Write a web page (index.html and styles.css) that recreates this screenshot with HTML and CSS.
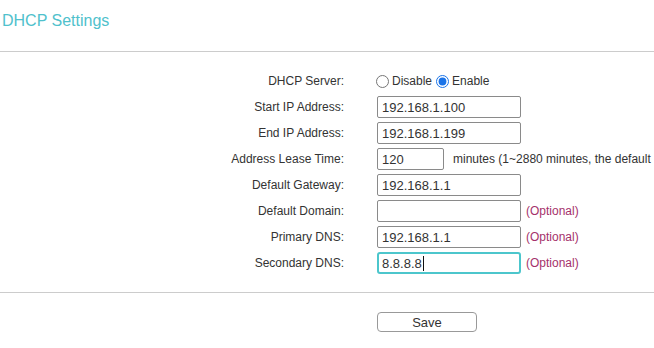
FILE: index.html
```html
<!DOCTYPE html>
<html lang="en">
<head>
    <meta charset="UTF-8">
    <meta name="viewport" content="width=device-width, initial-scale=1.0">
    <title>DHCP Settings</title>
    <link rel="stylesheet" href="styles.css">
</head>
<body>
    <div class="panel">
        <div class="panel-header">
            <h2>DHCP Settings</h2>
        </div>

        <div class="form">
            <label class="form-label">DHCP Server:</label>
            <div class="form-field radio-group">
                <label class="radio"><input type="radio" name="dhcp"> Disable</label>
                <label class="radio"><input type="radio" name="dhcp" checked> Enable</label>
            </div>

            <label class="form-label">Start IP Address:</label>
            <div class="form-field"><input type="text" class="text-input" value="192.168.1.100"></div>

            <label class="form-label">End IP Address:</label>
            <div class="form-field"><input type="text" class="text-input" value="192.168.1.199"></div>

            <label class="form-label">Address Lease Time:</label>
            <div class="form-field">
                <input type="text" class="text-input short" value="120">
                <span class="hint">minutes (1~2880 minutes, the default</span>
            </div>

            <label class="form-label">Default Gateway:</label>
            <div class="form-field"><input type="text" class="text-input" value="192.168.1.1"></div>

            <label class="form-label">Default Domain:</label>
            <div class="form-field">
                <input type="text" class="text-input" value="">
                <span class="optional">(Optional)</span>
            </div>

            <label class="form-label">Primary DNS:</label>
            <div class="form-field">
                <input type="text" class="text-input" value="192.168.1.1">
                <span class="optional">(Optional)</span>
            </div>

            <label class="form-label">Secondary DNS:</label>
            <div class="form-field">
                <div class="text-input focused">8.8.8.8<span class="caret"></span></div>
                <span class="optional">(Optional)</span>
            </div>
        </div>

        <div class="panel-footer">
            <button class="btn">Save</button>
        </div>
    </div>
</body>
</html>
```

FILE: styles.css
```css
:root {
    --title-color: #4fc1cc;
    --text-color: #333333;
    --line-color: #cccccc;
    --input-border: #8a8a8a;
    --focus-color: #4cc6cc;
    --optional-color: #a5316b;
}

* {
    margin: 0;
    padding: 0;
    box-sizing: border-box;
}

body {
    font-family: 'Liberation Sans', Arial, sans-serif;
    font-size: 12px;
    color: var(--text-color);
    background-color: #ffffff;
    overflow: hidden;
}

.panel {
    overflow: hidden;
}

.panel-header {
    height: 52px;
    padding: 12px 0 0 2px;
    border-bottom: 1px solid var(--line-color);
}

.panel-header h2 {
    font-size: 16px;
    font-weight: 400;
    line-height: 18px;
    color: var(--title-color);
}

.form {
    display: grid;
    grid-template-columns: 344px minmax(0, 1fr);
    column-gap: 33px;
    grid-auto-rows: 26px;
    padding: 16px 0 16px;
    border-bottom: 1px solid var(--line-color);
}

.form-label {
    display: flex;
    align-items: center;
    justify-content: flex-end;
    white-space: nowrap;
}

.form-field {
    display: flex;
    align-items: center;
    gap: 5px;
    white-space: nowrap;
}

.radio-group {
    gap: 5px;
}

.radio {
    display: flex;
    align-items: center;
    gap: 3px;
}

.radio input {
    width: 13px;
    height: 13px;
    margin: 0 0 0 -1px;
    accent-color: #1a73e8;
}

.text-input {
    flex: none;
    width: 144px;
    height: 22px;
    padding: 0 4px;
    border: 1px solid var(--input-border);
    border-radius: 2px;
    font-family: inherit;
    font-size: 13px;
    color: var(--text-color);
    background-color: #ffffff;
    outline: none;
}

.text-input.short {
    width: 67px;
    margin-right: 4px;
}

.text-input.focused {
    display: flex;
    align-items: center;
    border: 2px solid var(--focus-color);
    border-radius: 3px;
    padding: 0 3px;
}

.caret {
    display: inline-block;
    width: 1px;
    height: 15px;
    margin-left: 1px;
    background-color: #111111;
}

.optional {
    color: var(--optional-color);
}

.panel-footer {
    padding: 19px 0 0 377px;
}

.btn {
    width: 100px;
    height: 20px;
    border: 1px solid #999999;
    border-radius: 4px;
    background-color: #ffffff;
    font-family: inherit;
    font-size: 13px;
    color: var(--text-color);
    cursor: pointer;
}
```
